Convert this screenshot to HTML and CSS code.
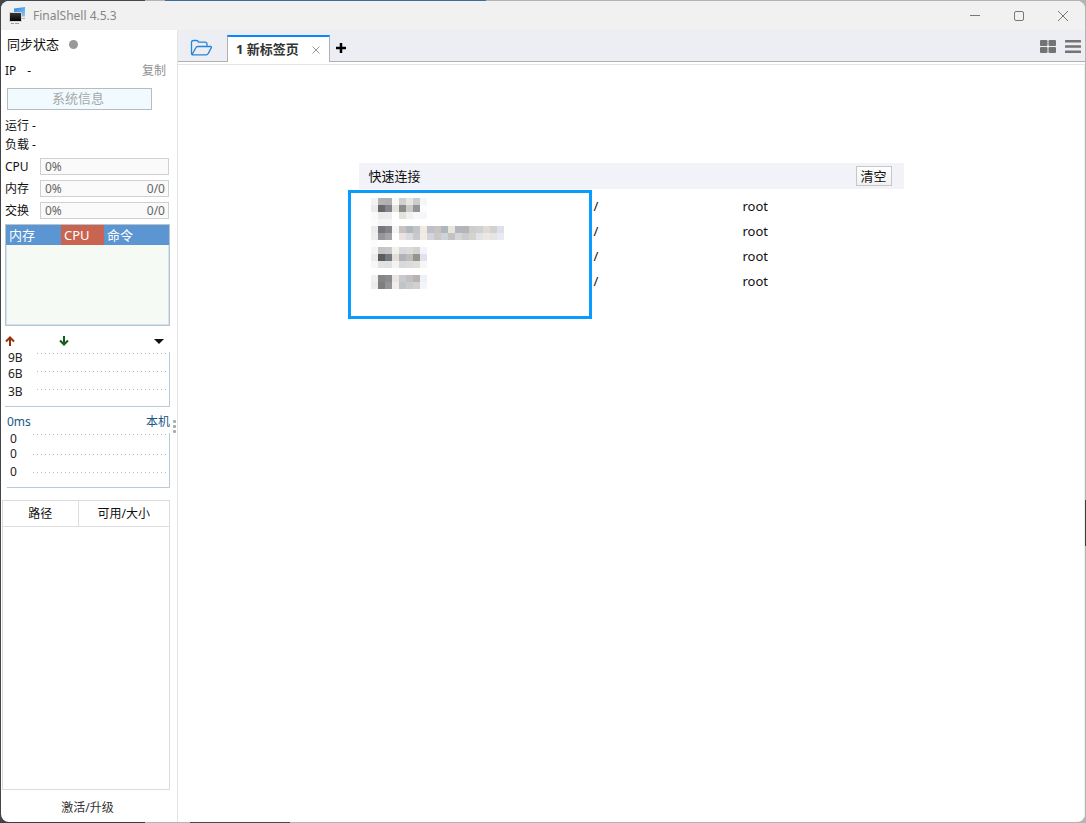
FILE: index.html
```
<!DOCTYPE html>
<html lang="zh-CN">
<head>
<meta charset="utf-8">
<title>FinalShell 4.5.3</title>
<link rel="stylesheet" href="styles.css">
</head>
<body>
<div class="window">
  <header class="titlebar">
    <svg class="logo" width="18" height="18" viewBox="0 0 18 18" aria-hidden="true">
      <defs>
        <linearGradient id="screen" x1="0" y1="0" x2="1" y2="1"><stop offset="0" stop-color="#2f86dc"/><stop offset="1" stop-color="#8cc8f6"/></linearGradient>
        <linearGradient id="front" x1="0" y1="0" x2="0" y2="1"><stop offset="0" stop-color="#3a3a3c"/><stop offset="1" stop-color="#000"/></linearGradient>
      </defs>
      <path d="M5 1.500 16 0v9.500H5z" fill="url(#screen)"/>
      <path d="M12 11h4v1h-4z" fill="#b5b5b5"/>
      <path d="M.5 5.500h12v9H.5z" fill="url(#front)" stroke="#d5d5d5"/>
      <path d="M2 16.500h3M6 16.500h4" stroke="#999"/>
    </svg>
    <h1 class="app-name">FinalShell 4.5.3</h1>
    <div class="window-controls">
      <button class="window-button" aria-label="最小化"><svg width="12" height="12" viewBox="0 0 12 12"><path d="M1 5.500h10"/></svg></button>
      <button class="window-button" aria-label="最大化"><svg width="12" height="12" viewBox="0 0 12 12"><rect x="1.500" y="1.500" width="9" height="9" rx="1.500"/></svg></button>
      <button class="window-button" aria-label="关闭"><svg width="12" height="12" viewBox="0 0 12 12"><path d="m1 1 10 10M11 1 1 11"/></svg></button>
    </div>
  </header>
  <div class="workspace">
    <aside class="sidebar">
      <div class="sync">同步状态<span class="sync-dot"></span></div>
      <div class="ip"><span class="ip-label">IP</span><span>-</span><button class="copy">复制</button></div>
      <button class="system-info">系统信息</button>
      <div class="stats">
        <div class="stat">运行 -</div>
        <div class="stat">负载 -</div>
      </div>
      <div class="meters">
        <div class="meter"><span class="meter-name">CPU</span><div class="meter-bar"><span>0%</span></div></div>
        <div class="meter"><span class="meter-name">内存</span><div class="meter-bar"><span>0%</span><span>0/0</span></div></div>
        <div class="meter"><span class="meter-name">交换</span><div class="meter-bar"><span>0%</span><span>0/0</span></div></div>
      </div>
      <div class="processes">
        <table class="process-table">
          <thead><tr><th class="col-memory">内存</th><th class="col-cpu">CPU</th><th>命令</th></tr></thead>
        </table>
      </div>
      <div class="traffic">
        <svg class="arrow-up" width="10" height="10" viewBox="0 0 10 10"><path d="M5 10V2M1 5.500l4-4 4 4"/></svg>
        <svg class="arrow-down" width="10" height="10" viewBox="0 0 10 10"><path d="M5 0v8M1 4.500l4 4 4-4"/></svg>
        <button class="interface-menu" aria-label="选择网卡"><svg width="10" height="5" viewBox="0 0 10 5"><path d="M0 0h10L5 5z"/></svg></button>
      </div>
      <svg class="chart" width="165" height="55" viewBox="0 0 165 55">
        <path class="grid-line" d="M32 1.500h131M32 19.500h131M32 37.500h131"/>
        <path class="axis" d="M164.500 0v54.500H0"/>
        <text x="3" y="10">9B</text><text x="3" y="26">6B</text><text x="3" y="44">3B</text>
      </svg>
      <div class="latency"><span>0ms</span><button class="host">本机</button></div>
      <svg class="chart" width="165" height="55" viewBox="0 0 165 55">
        <path class="grid-line" d="M28 1.500h135M28 21.500h135M28 39.500h135"/>
        <path class="axis" d="M164.500 0v54.500H2"/>
        <text x="5" y="10">0</text><text x="5" y="25">0</text><text x="5" y="43">0</text>
      </svg>
      <div class="disks">
        <table class="disk-table">
          <thead><tr><th class="col-path">路径</th><th>可用/大小</th></tr></thead>
        </table>
      </div>
      <button class="activate">激活/升级</button>
      <span class="splitter-grip"><i></i><i></i><i></i></span>
    </aside>
    <main class="main">
      <nav class="tabbar">
        <button class="folder" aria-label="连接管理器"><svg width="24" height="18" viewBox="0 0 24 18"><path d="M1.500 14.500v-11q0-2 2-2h3.200q1.300 0 1.800 1.700H15q2 0 2 2v2.100M2 15.700 5.700 9q.6-1.500 2-1.500h12.800q1.500 0 .7 1.400l-3 5.700q-.6 1.300-2 1.300H3q-1.500 0-1.500-1.500"/></svg></button>
        <div class="tab">
          <span class="tab-title">1 新标签页</span>
          <button class="tab-close" aria-label="关闭标签"><svg width="8" height="8" viewBox="0 0 8 8"><path d="m.5.5 7 7M7.500.5l-7 7"/></svg></button>
        </div>
        <button class="add-tab" aria-label="新建标签"><svg width="10" height="10" viewBox="0 0 10 10"><path d="M5 0v10M0 5h10"/></svg></button>
        <div class="view-buttons">
          <button class="view-button" aria-label="网格视图"><svg width="16" height="13" viewBox="0 0 16 13"><rect width="7.500" height="6" rx="1"/><rect x="8.500" width="7.500" height="6" rx="1"/><rect y="7" width="7.500" height="6" rx="1"/><rect x="8.500" y="7" width="7.500" height="6" rx="1"/></svg></button>
          <button class="view-button" aria-label="菜单"><svg width="16" height="13" viewBox="0 0 16 13"><rect width="16" height="2.500" rx=".5"/><rect y="5.300" width="16" height="2.500" rx=".5"/><rect y="10.500" width="16" height="2.500" rx=".5"/></svg></button>
        </div>
      </nav>
      <div class="page">
        <section class="quick">
          <div class="quick-header"><h2 class="quick-title">快速连接</h2><button class="clear">清空</button></div>
          <table class="quick-list">
            <tbody>
              <tr><td class="col-name"></td><td class="col-dir">/</td><td>root</td></tr>
              <tr><td></td><td>/</td><td>root</td></tr>
              <tr><td></td><td>/</td><td>root</td></tr>
              <tr><td></td><td>/</td><td>root</td></tr>
            </tbody>
          </table>
          <div class="highlight">
            <svg width="140" height="98" viewBox="0 0 20 14" shape-rendering="crispEdges" aria-hidden="true" id="mosaic"></svg>
          </div>
        </section>
      </div>
    </main>
  </div>
</div>
<script src="mosaic.js"></script>
</body>
</html>
```
FILE: mosaic.js
```
// Draws the masked host names: one string per row of blocks, "." is an empty block.
const rows = [
  "f3f3f3 b3b3b3 b0b0b0 f9f9f6 d0d0d3 e6e6e3 cdcdd0 f4f7f8",
  "ebebeb 67676d 838389 e6e4e1 8c8c8a cacac7 949499 f8feff",
  "fafafa ebebeb ececec . e2e2df f1f1f1 f8f8fa f6f6f8",
  "fcfcfc f5f5f5 f5f5f5",
  "ebebeb 77777b 848488 f7f5f2 cac1c1 b1b7bf c2c5c7 efebe1 bfbfc9 c7c4c1 adb7bf e8e5df b2b6be b3b5b8 cdcdd0 d0d0d0 dfdbd3 d0d2cd dfdfec",
  "eeeeee 96969a a5a5a9 . e8e2e2 dbdbdd c8c9cd efece4 d5d4dd cdc8c8 d0d3d6 c3c3c1 d6d6d6 cbcdcd d6d2d0 e2e2e9 e9e9e2 e5e5e2 e8e9f3",
  "fcfcfc",
  "f5f5f5 c5c5c5 c8c8c8 f1f1ec d7dad9 dcdcdc d3d3d1 f3f3f9",
  "ebebeb 5c5c60 77777f e3ddd5 b0b1ba c0bbbb 95968b dfe1ec",
  "f7f7f7 e2e2e2 e1e1e3 f3f3ef d7d9da dcdcdf e0dfdc f4f6f8",
  "",
  "f0f0f0 858585 8b8b8f ebe5e1 c7cbcf c1bfc1 b8b2b2 edf2f6",
  "ececec 7d7d82 94949b f0eeea bfc4c6 cacbcf d3d1cf f3f5f9"
];
const mosaic = document.getElementById("mosaic");
rows.forEach((row, y) => {
  row.split(" ").forEach((colour, x) => {
    if (!colour || colour === ".") return;
    const block = document.createElementNS("http://www.w3.org/2000/svg", "rect");
    block.setAttribute("x", x);
    block.setAttribute("y", y);
    block.setAttribute("width", 1);
    block.setAttribute("height", 1);
    block.setAttribute("fill", "#" + colour);
    mosaic.append(block);
  });
});
```
FILE: styles.css
```
* { box-sizing: border-box; }

body {
  margin: 0;
  height: 100vh;
  display: flex;
  padding: 1px;
  background:
    linear-gradient(90deg, #3a3d42 0 145px, #b4b4b4 145px 190px, #44474c 190px 290px, #b4b4b4 290px) bottom / 100% 1px no-repeat,
    linear-gradient(90deg, #44474c 0 145px, #b4b4b4 145px 165px, #3d6c9e 165px 486px, #b4b4b4 486px) top / 100% 1px no-repeat,
    linear-gradient(#44464e, #44464e) left / 9px 100% no-repeat,
    linear-gradient(#b4b4b4 0 500px, #3c3c3c 500px 546px, #b4b4b4 546px) right / 9px 100% no-repeat,
    #b4b4b4;
  font: 12px/16px "Noto Sans", "Noto Sans CJK SC", sans-serif;
  color: #111;
}

button {
  font: inherit;
  color: inherit;
  background: none;
  border: 0;
  padding: 0;
}

svg { display: block; flex: none; }
table { border-collapse: collapse; width: 100%; table-layout: fixed; }
th, td { padding: 0; font-weight: 400; text-align: left; }

.window {
  flex: 1;
  min-width: 0;
  display: flex;
  flex-direction: column;
  background: #fff;
  border-radius: 8px;
  overflow: hidden;
}

.titlebar {
  height: 29px;
  flex: none;
  display: flex;
  align-items: center;
  padding-left: 8px;
  background: #f1f1f1;
}
.app-name { margin: 0 0 0 6px; font-size: 12px; font-weight: 400; color: #868686; }
.window-controls { margin-left: auto; display: flex; }
.window-button { width: 44px; height: 29px; display: grid; place-items: center; }
.window-button svg { fill: none; stroke: #777; }

.workspace { flex: 1; min-height: 0; display: flex; }

.sidebar {
  position: relative;
  width: 177px;
  flex: none;
  display: flex;
  flex-direction: column;
  padding: 0 7px 0 4px;
  border-right: 1px solid #e4e4e4;
}
.sync { height: 29px; display: flex; align-items: center; gap: 10px; padding: 0 0 2px 2px; font-size: 13px; }
.sync-dot { width: 9px; height: 9px; margin-top: 2px; border-radius: 50%; background: #999; }
.ip { height: 24px; display: flex; align-items: center; gap: 11px; }
.copy { margin-left: auto; padding-right: 4px; color: #909090; }
.system-info {
  width: 145px;
  height: 22px;
  margin: 5px 0 6px 2px;
  padding: 0 3px 2px 0;
  background: #f0faff;
  border: 1px solid #b9bcbe;
  color: #a8a8a8;
  font-size: 13px;
  line-height: 18px;
}
.stat { height: 19px; line-height: 19px; }
.meters { display: flex; flex-direction: column; gap: 5px; margin-top: 4px; }
.meter { display: flex; align-items: center; height: 17px; padding-right: 1px; }
.meter-name { width: 35px; }
.meter-bar {
  flex: 1;
  height: 17px;
  display: flex;
  justify-content: space-between;
  align-items: center;
  padding: 0 3px 0 4px;
  border: 1px solid #d0d0d0;
  background: #fafafa;
  color: #666;
}
.processes { height: 102px; margin-top: 5px; border: 1px solid #b9c3cb; background: #f5faf5; box-shadow: inset 0 0 0 1px #cfe3f2; }
.process-table th { height: 20px; padding-left: 3px; background: #5b96d3; color: #fff; font-size: 13px; }
.process-table .col-memory { width: 55px; }
.process-table .col-cpu { width: 43px; background: #c86450; }
.traffic { height: 16px; margin: 7px 0 3px; display: flex; align-items: center; }
.traffic path { fill: none; stroke-width: 2; }
.arrow-up path { stroke: #96300a; }
.arrow-down { margin-left: 44px; }
.arrow-down path { stroke: #145c1c; }
.traffic .interface-menu { margin-left: auto; padding-right: 6px; }
.traffic .interface-menu path { fill: #111; }
.grid-line { fill: none; stroke: #bbb; stroke-dasharray: 1 3; }
.axis { fill: none; stroke: #b8ccd6; }
.chart { overflow: visible; }
.chart text { font-size: 12px; fill: #222; }
.latency { height: 16px; margin: 7px 0 3px; padding: 0 0 0 2px; display: flex; justify-content: space-between; align-items: center; color: #1c5785; }
.disks { flex: 1; margin: 12px 0 0 -3px; border: 1px solid #dcdcdc; }
.disk-table th { height: 25px; padding-top: 2px; text-align: center; border-bottom: 1px solid #dedede; }
.disk-table .col-path { width: 75px; border-right: 1px solid #dedede; }
.activate { height: 32px; padding-top: 4px; color: #333; }
.splitter-grip { position: absolute; right: 1px; top: 390px; display: grid; gap: 2px; }
.splitter-grip i { width: 3px; height: 3px; border-radius: 1px; background: #aaa; }

.main { flex: 1; min-width: 0; display: flex; flex-direction: column; }
.tabbar {
  height: 32px;
  flex: none;
  display: flex;
  align-items: flex-end;
  background: #edeef3;
  box-shadow: inset 0 -1px #b0b0b0;
}
.folder { width: 49px; height: 28px; padding-right: 2px; display: grid; place-items: center; }
.folder path { fill: none; stroke: #2585d8; stroke-width: 1.300; }
.tab {
  height: 27px;
  display: flex;
  align-items: center;
  gap: 13px;
  padding: 0 9px 0 8px;
  background: #fff;
  border: solid #b0b0b0;
  border-width: 2px 1px 0;
  border-top-color: #0a84ff;
}
.tab-title { padding-bottom: 2px; font-size: 13px; font-weight: 700; color: #333; }
.tab-close path { fill: none; stroke: #999; }
.add-tab { height: 29px; padding-left: 6px; }
.add-tab path { stroke: #000; stroke-width: 2.500; }
.view-buttons { margin-left: auto; display: flex; gap: 9px; padding: 0 4px 9px 0; }
.view-button svg { fill: #737373; }

.page { flex: 1; margin-top: 2px; border-top: 1px solid #e4e4e4; border-right: 1px solid #eee; padding-top: 98px; }
.quick { position: relative; max-width: 545px; margin: 0 auto; font-size: 13px; }
.quick-header { height: 26px; display: flex; align-items: center; justify-content: space-between; padding: 0 12px 0 10px; background: #f2f3f8; }
.quick-title { margin: 0; font-size: 13px; font-weight: 400; }
.clear { height: 20px; width: 36px; border: 1px solid #c5c8c5; background: linear-gradient(#fff, #f1f1f1); line-height: 16px; }
.quick-list { margin-top: 4px; }
.quick-list td { height: 25px; }
.quick-list .col-name { width: 235px; }
.quick-list .col-dir { width: 149px; }
.highlight { position: absolute; left: -11px; top: 27px; width: 244px; height: 129px; padding: 5px 20px; border: 3px solid #0a9bff; }
```
